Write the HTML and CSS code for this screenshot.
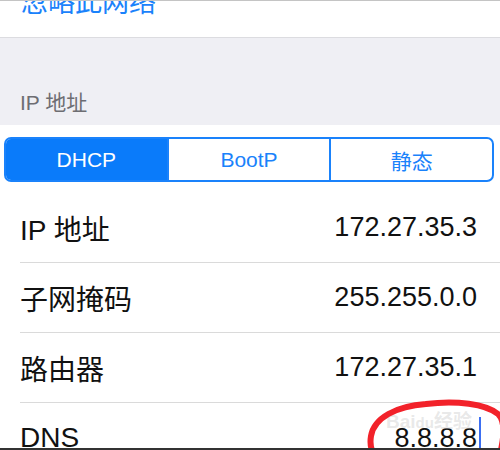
FILE: index.html
```html
<!DOCTYPE html>
<html lang="zh-CN">
<head>
    <meta charset="UTF-8">
    <title>IP 地址</title>
    <link rel="stylesheet" href="styles.css">
</head>
<body>

    <div class="ignore-row">
        <span class="ignore-text">忽略此网络</span>
    </div>

    <div class="section-header">IP 地址</div>

    <div class="settings">
        <div class="segmented">
            <div class="segment active">DHCP</div>
            <div class="segment">BootP</div>
            <div class="segment">静态</div>
        </div>

        <div class="row">
            <span class="label">IP 地址</span>
            <span class="value">172.27.35.3</span>
        </div>
        <div class="row">
            <span class="label">子网掩码</span>
            <span class="value">255.255.0.0</span>
        </div>
        <div class="row">
            <span class="label">路由器</span>
            <span class="value">172.27.35.1</span>
        </div>
        <div class="row last">
            <span class="label">DNS</span>
            <span class="value">8.8.8.8<span class="cursor"></span></span>
        </div>
    </div>

    <!-- hand drawn mark and watermark over the DNS value -->
    <div class="watermark">Bai<span class="du">du</span>经验</div>
    <svg class="scribble" width="140" height="60" viewBox="0 0 140 60">
        <path d="M60 6 C30 8 8 20 5 38 C3 50 8 58 12 62 M60 6 C90 2 120 6 132 16 C140 24 138 40 134 56"
              fill="none" stroke="#f2222a" stroke-width="6" stroke-linecap="round"/>
    </svg>
    <div class="bottom-edge"></div>

</body>
</html>
```

FILE: styles.css
```css
body {
    margin: 0;
    width: 500px;
    height: 450px;
    overflow: hidden;
    font-family: "Liberation Sans", "Noto Sans CJK SC", sans-serif;
    background: #fff;
    border-top: 1px solid #c4c4c4;
    box-sizing: border-box;
}
.ignore-row {
    height: 36px;
    overflow: hidden;
    border-bottom: 1px solid #dcdce0;
}
.ignore-text {
    display: block;
    margin-top: -16px;
    padding-left: 21px;
    font-size: 27px;
    line-height: 36px;
    color: #1a82fb;
}
.section-header {
    height: 87px;
    box-sizing: border-box;
    background: #efeff4;
    color: #6d6d72;
    font-size: 21px;
    padding: 53px 0 0 20px;
    line-height: 24px;
}
.settings {
    padding-top: 12px;
}
.segmented {
    display: flex;
    height: 45px;
    margin: 0 6px 11px 4px;
    border: 2px solid #1a82fb;
    border-radius: 7px;
    overflow: hidden;
    box-sizing: border-box;
}
.segment {
    flex: 1;
    display: flex;
    align-items: center;
    justify-content: center;
    color: #1a82fb;
    font-size: 21px;
    border-left: 2px solid #1a82fb;
}
.segment:first-child {
    border-left: none;
}
.segment.active {
    background: #0a7bfa;
    color: #fff;
}
.row {
    display: flex;
    justify-content: space-between;
    align-items: center;
    height: 70px;
    margin-left: 20px;
    padding-right: 23px;
    border-bottom: 1px solid #dadada;
    font-size: 28px;
    color: #111;
    box-sizing: border-box;
}
.row.last {
    border-bottom: none;
}
.value {
    position: relative;
    font-size: 27px;
}
.cursor {
    position: absolute;
    right: -4px;
    top: -6px;
    width: 2px;
    height: 36px;
    background: #3b6ff2;
}
.watermark {
    position: absolute;
    left: 386px;
    top: 406px;
    font-size: 19px;
    font-weight: bold;
    color: rgba(205, 205, 205, 0.45);
}
.watermark .du {
    font-size: 15px;
}
.scribble {
    position: absolute;
    left: 366px;
    top: 398px;
}
.bottom-edge {
    position: fixed;
    left: 0;
    right: 0;
    bottom: 0;
    height: 2px;
    background: #333;
}
```
